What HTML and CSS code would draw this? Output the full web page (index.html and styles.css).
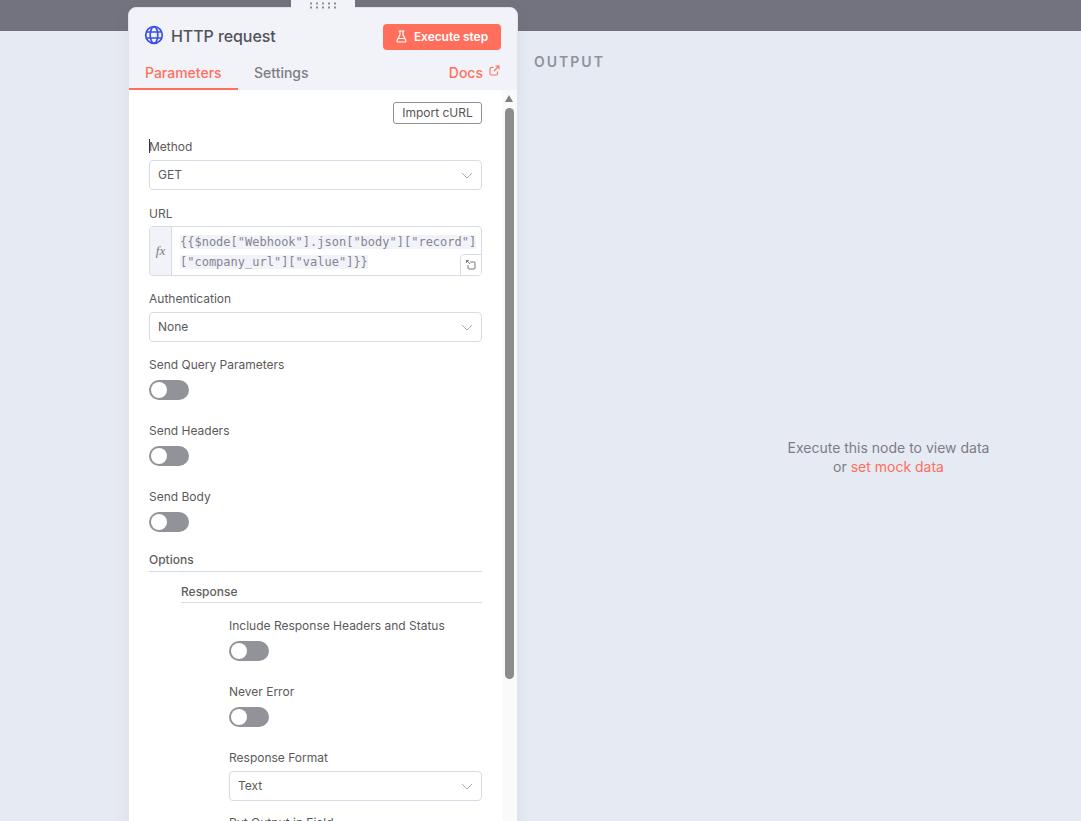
FILE: index.html
```html
<!DOCTYPE html>
<html lang="en">
<head>
<meta charset="utf-8">
<title>HTTP request</title>
<link rel="stylesheet" href="styles.css">
</head>
<body>
<div class="app">
  <div class="topbar"></div>
  <div class="canvas">
    <div class="output-title">OUTPUT</div>
    <div class="output-empty">
      <div>Execute this node to view data</div>
      <div>or <span class="link">set mock data</span></div>
    </div>
  </div>
  <section class="panel">
    <div class="grip"><svg width="26" height="9" viewBox="0 0 26 9"><g fill="#8d8d9a"><rect x="0" y="2.500" width="2" height="2"/><rect x="6" y="2.500" width="2" height="2"/><rect x="12" y="2.500" width="2" height="2"/><rect x="18" y="2.500" width="2" height="2"/><rect x="24" y="2.500" width="2" height="2"/><rect x="0" y="6.500" width="2" height="2"/><rect x="6" y="6.500" width="2" height="2"/><rect x="12" y="6.500" width="2" height="2"/><rect x="18" y="6.500" width="2" height="2"/><rect x="24" y="6.500" width="2" height="2"/></g></svg></div>
    <header class="head">
      <div class="title-row">
        <svg class="globe" width="20" height="20" viewBox="0 0 20 20" fill="none" stroke="#3b4fe6" stroke-width="1.700"><circle cx="10" cy="10" r="8.300"/><ellipse cx="10" cy="10" rx="3.800" ry="8.300"/><path d="M2.400 7h15.200M2.400 13h15.200"/></svg>
        <h1 class="title">HTTP request</h1>
        <button class="exec"><svg width="11" height="13" viewBox="0 0 11 13" fill="none" stroke="#fff" stroke-width="1.200" stroke-linejoin="round" stroke-linecap="round"><path d="M3 1h5M4 1v3.800L1.200 10.300A1.100 1.100 0 0 0 2.200 12h6.600a1.100 1.100 0 0 0 1-1.700L7 4.800V1"/><path d="M2.800 8.500h5.400"/></svg><span>Execute step</span></button>
      </div>
      <nav class="tabs">
        <span class="tab active">Parameters</span>
        <span class="tab">Settings</span>
        <span class="docs">Docs <svg width="11" height="11" viewBox="0 0 11 11" fill="none" stroke="#ff6f5c" stroke-width="1.100"><path d="M8.500 6.500v2.300a1.200 1.200 0 0 1-1.200 1.200H2.200A1.200 1.200 0 0 1 1 8.800V3.700a1.200 1.200 0 0 1 1.200-1.200h2.300"/><path d="M6.500 1H10v3.500M10 1L5 6"/></svg></span>
      </nav>
    </header>
    <div class="body">
      <div class="form">
        <div class="import-row"><button class="import">Import cURL</button></div>
        <div class="field first">
          <label class="label"><span class="caret"></span>Method</label>
          <div class="select">GET<svg class="chev" width="12" height="7" viewBox="0 0 12 7" fill="none" stroke="#a9adb9"><path d="M1 1l5 5 5-5"/></svg></div>
        </div>
        <div class="field url">
          <label class="label">URL</label>
          <div class="expr">
            <div class="fx">fx</div>
            <div class="code"><span class="hl">{{$node["Webhook"].json["body"]["record"]</span><br><span class="hl">["company_url"]["value"]}}</span></div>
            <div class="expand"><svg width="10" height="10" viewBox="0 0 10 10" fill="none" stroke="#666670" stroke-width="0.900"><path d="M0.500 0.500l3.500 3.500M0.500 0.500v2.300M0.500 0.500h2.300M4 2h4a1 1 0 0 1 1 1v5a1 1 0 0 1-1 1H3a1 1 0 0 1-1-1V5"/></svg></div>
          </div>
        </div>
        <div class="field auth">
          <label class="label">Authentication</label>
          <div class="select">None<svg class="chev" width="12" height="7" viewBox="0 0 12 7" fill="none" stroke="#a9adb9"><path d="M1 1l5 5 5-5"/></svg></div>
        </div>
        <div class="field toggle-field"><label class="label">Send Query Parameters</label><div class="toggle"></div></div>
        <div class="field toggle-field"><label class="label">Send Headers</label><div class="toggle"></div></div>
        <div class="field toggle-field"><label class="label">Send Body</label><div class="toggle"></div></div>
        <div class="group options">Options</div>
        <div class="nested">
          <div class="group response">Response</div>
          <div class="nested2">
            <div class="field toggle-field"><label class="label">Include Response Headers and Status</label><div class="toggle"></div></div>
            <div class="field toggle-field"><label class="label">Never Error</label><div class="toggle"></div></div>
            <div class="field format">
              <label class="label">Response Format</label>
              <div class="select">Text<svg class="chev" width="12" height="7" viewBox="0 0 12 7" fill="none" stroke="#a9adb9"><path d="M1 1l5 5 5-5"/></svg></div>
            </div>
            <div class="field put"><label class="label">Put Output in Field</label></div>
          </div>
        </div>
      </div>
      <div class="scrollbar">
        <div class="arrow"></div>
        <div class="thumb"></div>
      </div>
    </div>
  </section>
</div>
</body>
</html>
```

FILE: styles.css
```css
* { box-sizing: border-box; }
html, body { margin: 0; height: 100%; overflow: hidden; }
body { font-family: Inter, "Liberation Sans", sans-serif; background: #e6eaf3; color: #555; }
.app { position: relative; width: 1081px; height: 821px; overflow: hidden; }
.topbar { height: 31px; background: #737380; }
.canvas { position: relative; height: 790px; }
.output-title { position: absolute; left: 534px; top: 22px; font-size: 14px; font-weight: 600; letter-spacing: 2px; color: #8f929c; line-height: 17px; }
.output-empty { position: absolute; left: 695px; width: 387px; top: 407px; text-align: center; font-size: 14px; line-height: 19px; color: #7d7d87; }
.link { color: #ff6f5c; }
.panel { position: absolute; left: 128px; top: 7px; width: 390px; height: 830px; background: #f1f3f9; border: 1px solid #dfe3ed; border-radius: 8px; box-shadow: 0 4px 16px rgba(68, 28, 23, 0.06); display: flex; flex-direction: column; }
.grip { position: absolute; left: 162px; top: -8px; width: 64px; height: 9px; background: #f1f3f9; display: flex; justify-content: center; }
.head { height: 82px; flex: none; }
.title-row { display: flex; align-items: center; height: 46px; padding: 12px 16px 0 15px; }
.globe { flex: none; margin-bottom: 4px; }
.title { margin: 0 0 2px 7px; font-size: 16px; font-weight: 500; letter-spacing: -0.08px; color: #52525a; flex: 1; }
.exec { height: 26px; width: 118px; display: flex; align-items: center; justify-content: center; gap: 7px; border: 0; border-radius: 4px; background: #ff6f5c; color: #fff; font: 600 12px Inter, sans-serif; letter-spacing: -0.05px; padding: 0 0 2px; }
.tabs { display: flex; align-items: flex-start; height: 36px; padding-top: 10px; position: relative; }
.tab { font-size: 14px; font-weight: 500; line-height: 17px; color: #7d7d87; height: 26px; padding: 0 16px; }
.tab.active { color: #ff6f5c; border-bottom: 2px solid #ff6f5c; width: 109px; }
.docs { margin-left: auto; margin-right: 17px; color: #ff6f5c; font-size: 14px; font-weight: 500; line-height: 17px; display: flex; align-items: flex-start; gap: 6px; }
.docs svg { margin-top: 1px; }
.body { flex: 1; background: #fff; display: flex; min-height: 0; border-radius: 0 0 8px 8px; }
.form { width: 373px; padding: 12px 20px 0; flex: none; }
.import-row { display: flex; justify-content: flex-end; height: 22px; }
.import { height: 22px; width: 89px; padding: 0 0 1px; background: #fff; border: 1px solid #8f8f99; border-radius: 3px; font: 400 12px Inter, sans-serif; color: #555; }
.label { display: block; font-size: 12px; line-height: 15px; color: #5a5a5a; position: relative; }
.caret { position: absolute; left: 0; top: 0; width: 1px; height: 14px; background: #333; }
.field.first { margin-top: 15px; }
.select { position: relative; margin-top: 6px; height: 30px; border: 1px solid #d7dbe8; border-radius: 4px; background: #fff; padding-left: 8px; font-size: 12px; line-height: 27px; color: #5a5a5a; }
.chev { position: absolute; right: 8px; top: 11px; }
.url { margin-top: 16px; }
.expr { position: relative; display: flex; margin-top: 5px; height: 50px; border: 1px solid #d7dbe8; border-radius: 4px; overflow: hidden; }
.fx { width: 22px; flex: none; background: #f1f3f9; border-right: 1px solid #d7dbe8; font: italic 13px "Liberation Serif", serif; color: #77777f; display: flex; align-items: center; justify-content: center; }
.code { flex: 1; padding: 5px 0 0 8px; font: 12px/20px "DejaVu Sans Mono", monospace; color: #85858f; white-space: nowrap; }
.hl { background: #f1f3f9; }
.expand { position: absolute; right: -1px; bottom: -1px; width: 22px; height: 22px; background: #fff; border: 1px solid #d7dbe8; border-top-left-radius: 4px; display: flex; align-items: center; justify-content: center; }
.auth { margin-top: 15px; }
.toggle-field { margin-top: 15px; height: 51px; }
.toggle { position: relative; margin-top: 8px; width: 40px; height: 20px; border-radius: 10px; background: #929299; }
.toggle::after { content: ""; position: absolute; left: 2px; top: 2px; width: 16px; height: 16px; border-radius: 50%; background: #fff; }
.group { font-size: 12px; font-weight: 500; line-height: 15px; color: #5f5f5f; border-bottom: 1px solid #d7dbe8; }
.options { margin-top: 12px; padding-bottom: 4px; }
.nested { padding-left: 32px; }
.response { margin-top: 12px; padding-bottom: 3px; }
.nested2 { padding-left: 48px; }
.format { margin-top: 15px; }
.put { margin-top: 14px; }
.scrollbar { position: relative; width: 15px; flex: none; background: #fafafa; }
.arrow { position: absolute; left: 3px; top: 5px; width: 0; height: 0; border-left: 4.500px solid transparent; border-right: 4.500px solid transparent; border-bottom: 7px solid #808080; }
.thumb { position: absolute; left: 3px; top: 18px; width: 9px; height: 571px; border-radius: 5px; background: #8c8c8c; }
```
